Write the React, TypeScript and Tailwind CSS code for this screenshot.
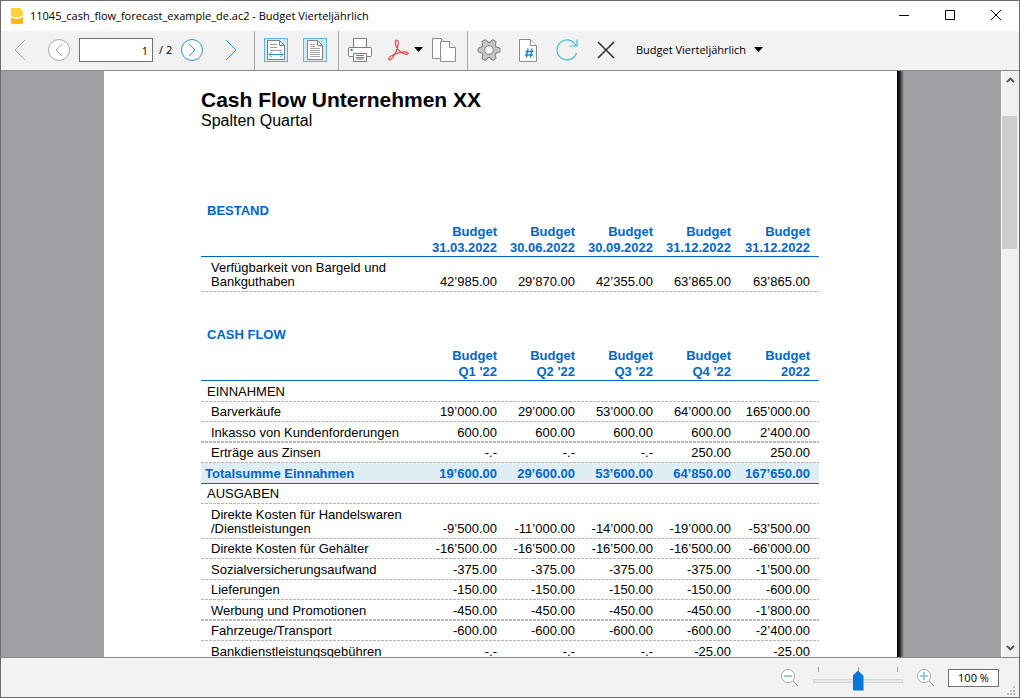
import type { ReactNode } from "react";

type Row = { kind: "group" | "item" | "total"; label: string; values: string[]; heavy?: boolean };

const balanceHeads = [
  ["Budget", "31.03.2022"],
  ["Budget", "30.06.2022"],
  ["Budget", "30.09.2022"],
  ["Budget", "31.12.2022"],
  ["Budget", "31.12.2022"],
];

const flowHeads = [
  ["Budget", "Q1 '22"],
  ["Budget", "Q2 '22"],
  ["Budget", "Q3 '22"],
  ["Budget", "Q4 '22"],
  ["Budget", "2022"],
];

const balanceRows: Row[] = [
  {
    kind: "item",
    label: "Verfügbarkeit von Bargeld und\nBankguthaben",
    values: ["42’985.00", "29’870.00", "42’355.00", "63’865.00", "63’865.00"],
  },
];

const flowRows: Row[] = [
  { kind: "group", label: "EINNAHMEN", values: ["", "", "", "", ""] },
  { kind: "item", label: "Barverkäufe", values: ["19’000.00", "29’000.00", "53’000.00", "64’000.00", "165’000.00"] },
  { kind: "item", label: "Inkasso von Kundenforderungen", values: ["600.00", "600.00", "600.00", "600.00", "2’400.00"], heavy: true },
  { kind: "item", label: "Erträge aus Zinsen", values: ["-.-", "-.-", "-.-", "250.00", "250.00"] },
  { kind: "total", label: "Totalsumme Einnahmen", values: ["19’600.00", "29’600.00", "53’600.00", "64’850.00", "167’650.00"] },
  { kind: "group", label: "AUSGABEN", values: ["", "", "", "", ""] },
  {
    kind: "item",
    label: "Direkte Kosten für Handelswaren\n/Dienstleistungen",
    values: ["-9’500.00", "-11’000.00", "-14’000.00", "-19’000.00", "-53’500.00"],
  },
  { kind: "item", label: "Direkte Kosten für Gehälter", values: ["-16’500.00", "-16’500.00", "-16’500.00", "-16’500.00", "-66’000.00"] },
  { kind: "item", label: "Sozialversicherungsaufwand", values: ["-375.00", "-375.00", "-375.00", "-375.00", "-1’500.00"] },
  { kind: "item", label: "Lieferungen", values: ["-150.00", "-150.00", "-150.00", "-150.00", "-600.00"] },
  { kind: "item", label: "Werbung und Promotionen", values: ["-450.00", "-450.00", "-450.00", "-450.00", "-1’800.00"], heavy: true },
  { kind: "item", label: "Fahrzeuge/Transport", values: ["-600.00", "-600.00", "-600.00", "-600.00", "-2’400.00"] },
  { kind: "item", label: "Bankdienstleistungsgebühren", values: ["-.-", "-.-", "-.-", "-25.00", "-25.00"] },
];

const dashed =
  "bg-[repeating-linear-gradient(90deg,#b8b8b8_0_3px,transparent_3px_4px)] bg-bottom bg-no-repeat *:pb-[3px]";

const rowStyle = {
  group: dashed,
  item: dashed,
  total: "bg-[#dfedf5] text-[#0066cc] *:border-b *:border-[#0066cc] *:pb-0.5",
};

const ruleSize = (row: Row) => {
  if (row.kind === "total") return "";
  return row.heavy ? "bg-size-[100%_2px]" : "bg-size-[100%_1px]";
};

const labelStyle = {
  group: "pl-1.5 font-normal",
  item: "pl-2.5 font-normal",
  total: "pl-1 font-bold",
};

function ReportTable({ title, heads, rows }: { title: string; heads: string[][]; rows: Row[] }) {
  return (
    <table className="w-full table-fixed border-separate border-spacing-0 text-[13px] leading-[14px]">
      <caption className="pb-[5px] pl-1.5 text-left leading-4 font-bold text-[#0066cc]">{title}</caption>
      <colgroup>
        <col />
        {heads.map((_, i) => (
          <col key={i} className="w-[78px]" />
        ))}
      </colgroup>
      <thead>
        <tr className="leading-4 text-[#0066cc] *:border-b *:border-[#0066cc]">
          <td />
          {heads.map(([top, bottom], i) => (
            <th key={i} scope="col" className="pr-2.5 text-right font-bold whitespace-nowrap last:pr-[9px]">
              {top}
              <br />
              {bottom}
            </th>
          ))}
        </tr>
      </thead>
      <tbody>
        {rows.map((row) => (
          <tr
            key={row.label}
            className={`align-bottom odd:h-[21px] even:h-5 ${rowStyle[row.kind]} ${ruleSize(row)}`}
          >
            <th
              scope="row"
              className={`text-left whitespace-pre ${labelStyle[row.kind]} ${row.label.includes("\n") ? "pt-1" : ""}`}
            >
              {row.label}
            </th>
            {row.values.map((value, i) => (
              <td
                key={i}
                className={`pr-2.5 text-right whitespace-nowrap last:pr-[9px] ${row.kind === "total" ? "font-bold" : ""}`}
              >
                {value}
              </td>
            ))}
          </tr>
        ))}
      </tbody>
    </table>
  );
}

function IconButton({ label, narrow, children }: { label: string; narrow?: boolean; children: ReactNode }) {
  return (
    <button
      type="button"
      aria-label={label}
      className={`flex h-6 shrink-0 items-center justify-center ${narrow ? "w-4" : "w-6"}`}
    >
      {children}
    </button>
  );
}

function Chevron({ flip, color }: { flip?: boolean; color: string }) {
  return (
    <svg width="12" height="22" viewBox="0 0 12 22" fill="none" stroke={color}>
      <path d={flip ? "M1 1l10 10L1 21" : "M11 1L1 11l10 10"} />
    </svg>
  );
}

function RoundChevron({ flip, color }: { flip?: boolean; color: string }) {
  return (
    <svg width="22" height="22" viewBox="0 0 22 22" fill="#fff" stroke={color}>
      <circle cx="11" cy="11" r="10.500" />
      <path d={flip ? "M8 5l6 6-6 6" : "M14 5l-6 6 6 6"} fill="none" />
    </svg>
  );
}

function FitWidthIcon() {
  return (
    <svg width="24" height="24" viewBox="0 0 24 24" fill="none">
      <rect x=".5" y=".5" width="23" height="23" fill="#d3e9f6" stroke="#62b2e2" />
      <path d="M3.500 2.500h12l5 5v14h-17z" fill="#fff" stroke="#808080" />
      <path d="M15.500 2.500v5h5" stroke="#808080" />
      <path d="M6 6.500h7M6 9.500h7M6 12.500h12" stroke="#a0a0a0" />
      <path d="M5 16.500h14M8 13.500l-3 3 3 3M16 13.500l3 3-3 3" stroke="#2f94d4" />
    </svg>
  );
}

function FitPageIcon() {
  return (
    <svg width="24" height="24" viewBox="0 0 24 24" fill="none">
      <rect x=".5" y=".5" width="23" height="23" fill="#d3e9f6" stroke="#62b2e2" />
      <path d="M4.500 2.500h10l5 5v14h-15z" fill="#fff" stroke="#808080" />
      <path d="M14.500 2.500v5h5" stroke="#808080" />
      <path d="M7 6.500h5M7 8.500h5M7 10.500h10M7 12.500h10M7 14.500h10M7 16.500h10M7 18.500h10" stroke="#a8a8a8" />
    </svg>
  );
}

function PrinterIcon() {
  return (
    <svg width="24" height="24" viewBox="0 0 24 24" fill="#fff" stroke="#7c7c7c">
      <path d="M5.500 9.500v-9h13v9" />
      <path d="M1.500 9.500h21q1 0 1 1v7q0 1-1 1h-21q-1 0-1-1v-7q0-1 1-1z" />
      <path d="M5.500 15.500h13v8h-13z" />
      <path d="M8 17.500h8M8 19.500h8M8 21h8" strokeWidth="1.200" />
      <circle cx="3.500" cy="12" r="1.300" fill="#2f94d4" stroke="none" />
    </svg>
  );
}

function PdfIcon() {
  return (
    <svg width="22" height="22" viewBox="0 0 22 22" fill="none" stroke="#f0403c" strokeWidth="1.200">
      <path d="M8.300 8C7.300 5 6.600 1 8.700 1s1.800 3.500.9 7C8.500 12.500 4.500 20.500 1.900 20.800c-2.300.2-1.200-3.300 4-5.300 4.300-1.600 9.500-2.900 12.500-2.400 2.400.5 2.200 2.300.2 2.200-3.300-.2-8.500-3.800-10.300-7.300z" />
    </svg>
  );
}

function CopyIcon() {
  return (
    <svg width="24" height="24" viewBox="0 0 24 24" fill="#fff" stroke="#8c8c8c">
      <path d="M.5.500h9l4 4v16H.500z" />
      <path d="M9.500.500v4h4" />
      <path d="M8.500 3.500h9l6 6v14h-15z" />
      <path d="M17.500 3.500v6h6" />
    </svg>
  );
}

const gearTeeth = ["rotate(0 12 12)", "rotate(60 12 12)", "rotate(120 12 12)"];

function GearShape() {
  return (
    <>
      <circle cx="12" cy="12" r="7.300" />
      {gearTeeth.map((turn) => (
        <path key={turn} transform={turn} d="M4 9.500L1.500 10.500v3L4 14.500h16l2.500-1v-3L20 9.500z" />
      ))}
    </>
  );
}

function GearIcon() {
  return (
    <svg width="24" height="24" viewBox="0 0 24 24">
      <g fill="#777" stroke="#777" strokeWidth="1.800" strokeLinejoin="round">
        <GearShape />
      </g>
      <g fill="#c6c6c6">
        <GearShape />
      </g>
      <circle cx="12" cy="12" r="4.300" fill="#f8f8f8" stroke="#808080" />
    </svg>
  );
}

function PageNumberIcon() {
  return (
    <svg width="18" height="24" viewBox="0 0 18 24" fill="#fff" stroke="#8c8c8c">
      <path d="M.5 1.500h11l6 6v16H.500z" />
      <path d="M11.500 1.500v6h6" />
      <path d="M9 10.500l-1.500 9M13 10.500l-1.500 9M6.500 13.500h8M6 17h8" stroke="#1f86cf" strokeWidth="1.500" />
    </svg>
  );
}

function RefreshIcon() {
  return (
    <svg width="22" height="24" viewBox="0 0 22 24" fill="none" stroke="#45bad2" strokeWidth="1.200">
      <path d="M20 7.500A10 10 0 1 0 20.500 15M21 1.500v6.500h-7" />
    </svg>
  );
}

function CloseIcon() {
  return (
    <svg width="18" height="18" viewBox="0 0 18 18" fill="none" stroke="#333" strokeWidth="1.600">
      <path d="M1 1l16 16M17 1L1 17" />
    </svg>
  );
}

function Triangle() {
  return (
    <svg width="9" height="6" viewBox="0 0 9 6">
      <path d="M0 0h9L4.500 5z" />
    </svg>
  );
}

function ZoomGlass({ plus }: { plus?: boolean }) {
  return (
    <svg width="18" height="18" viewBox="0 0 18 18" fill="#fff" stroke="#aaa">
      <path d="M12 12l5 5" stroke="#888" />
      <circle cx="7" cy="7" r="6.500" />
      <path d={plus ? "M3 7h8M7 3v8" : "M3 7h8"} stroke="#7dbde6" strokeWidth="1.600" />
    </svg>
  );
}

function TitleBar() {
  return (
    <header className="flex h-[30px] shrink-0 items-center bg-white pr-[18px] pl-[9px]">
      <svg width="14" height="16" viewBox="0 0 14 16" className="mr-1.5 shrink-0">
        <path d="M1 1q0-1 1-1h8l3 3v4Q7 11.500 1 8z" fill="#ffd23c" />
        <path d="M1 9.500Q7 12.500 13 9v5.500q0 1.500-1.500 1.500H2.500Q1 16 1 14.500z" fill="#fbb917" />
      </svg>
      <h1 className="grow whitespace-nowrap">11045_cash_flow_forecast_example_de.ac2 - Budget Vierteljährlich</h1>
      <div className="flex items-center gap-9 pb-0.5">
        <button type="button" aria-label="Minimieren">
          <svg width="10" height="10" viewBox="0 0 10 10" stroke="#000">
            <path d="M0 5.500h10" />
          </svg>
        </button>
        <button type="button" aria-label="Maximieren">
          <svg width="10" height="10" viewBox="0 0 10 10" fill="none" stroke="#000">
            <path d="M.5.500h9v9h-9z" />
          </svg>
        </button>
        <button type="button" aria-label="Schliessen">
          <svg width="10" height="10" viewBox="0 0 10 10" fill="none" stroke="#000">
            <path d="M0 0l10 10M10 0L0 10" />
          </svg>
        </button>
      </div>
    </header>
  );
}

function Divider() {
  return <div className="-mb-px w-px self-stretch bg-[#a8a8a8]" />;
}

function Toolbar() {
  return (
    <div className="flex h-10 shrink-0 items-center border-b border-[#888c94] bg-[#f2f2f2] pb-px">
      <div className="flex items-center pr-[11px] pl-[11px]">
        <IconButton label="Erste Seite" narrow>
          <Chevron color="#aaa" />
        </IconButton>
        <div className="pr-2 pl-[19px]">
          <IconButton label="Vorherige Seite">
            <RoundChevron color="#aaa" />
          </IconButton>
        </div>
        <input
          aria-label="Seite"
          defaultValue="1"
          className="h-6 w-[74px] border border-[#707070] bg-white px-1 text-right"
        />
        <span className="w-[27px] pl-1.5 whitespace-nowrap">/ 2</span>
        <IconButton label="Nächste Seite">
          <RoundChevron flip color="#2f94d4" />
        </IconButton>
        <div className="pl-[15px]">
          <IconButton label="Letzte Seite">
            <Chevron flip color="#2f94d4" />
          </IconButton>
        </div>
      </div>
      <Divider />
      <div className="flex items-center gap-[15px] pr-[11px] pl-[9px]">
        <IconButton label="Seitenbreite">
          <FitWidthIcon />
        </IconButton>
        <IconButton label="Ganze Seite">
          <FitPageIcon />
        </IconButton>
      </div>
      <Divider />
      <div className="flex items-center pr-[11px] pl-[9px]">
        <IconButton label="Drucken">
          <PrinterIcon />
        </IconButton>
        <div className="pr-[9px] pl-4">
          <button type="button" aria-label="PDF" className="flex items-center gap-1">
            <PdfIcon />
            <Triangle />
          </button>
        </div>
        <IconButton label="Kopieren">
          <CopyIcon />
        </IconButton>
      </div>
      <Divider />
      <div className="flex items-center gap-[15px] pl-[9px]">
        <IconButton label="Einstellungen">
          <GearIcon />
        </IconButton>
        <IconButton label="Seitennummer">
          <PageNumberIcon />
        </IconButton>
        <IconButton label="Aktualisieren">
          <RefreshIcon />
        </IconButton>
        <IconButton label="Abbrechen">
          <CloseIcon />
        </IconButton>
      </div>
      <button type="button" className="flex items-center gap-2 pl-[18px] whitespace-nowrap">
        Budget Vierteljährlich
        <Triangle />
      </button>
    </div>
  );
}

function ScrollBar() {
  return (
    <div className="flex w-[18px] shrink-0 flex-col border-l border-white bg-[#f0f0f0]">
      <button type="button" aria-label="Nach oben" className="flex h-[18px] items-center justify-center">
        <svg width="9" height="6" viewBox="0 0 9 6" fill="none" stroke="#555" strokeWidth="1.800">
          <path d="M1 5l3.500-3.500L8 5" />
        </svg>
      </button>
      <div className="flex grow flex-col">
        <div className="grow-[27]" />
        <div className="mr-0.5 grow-[133] bg-[#cdcdcd]" />
        <div className="grow-[391]" />
      </div>
      <button type="button" aria-label="Nach unten" className="flex h-[18px] items-center justify-center">
        <svg width="9" height="6" viewBox="0 0 9 6" fill="none" stroke="#555" strokeWidth="1.800">
          <path d="M1 1l3.500 3.500L8 1" />
        </svg>
      </button>
    </div>
  );
}

function StatusBar() {
  return (
    <footer className="flex h-10 shrink-0 items-center justify-end border-t border-[#888] bg-[#f2f2f2]">
      <button type="button" aria-label="Verkleinern">
        <ZoomGlass />
      </button>
      <div className="grid px-[13px]">
        <div className="col-start-1 row-start-1 h-7 w-[92px]">
          <svg width="92" height="28" viewBox="0 0 92 28" fill="none">
            <path d="M6.500 3v5M46.500 3v5M85.500 3v5" stroke="#a5a58f" />
            <rect x="1.500" y="15.500" width="89" height="3" fill="#e7eaea" stroke="#d6d6d6" />
          </svg>
        </div>
        <input
          type="range"
          aria-label="Zoom"
          min={0}
          max={100}
          defaultValue={50}
          className="col-start-1 row-start-1 h-7 w-[92px] appearance-none bg-transparent [&::-webkit-slider-thumb]:mt-1.5 [&::-webkit-slider-thumb]:h-5 [&::-webkit-slider-thumb]:w-[11px] [&::-webkit-slider-thumb]:appearance-none [&::-webkit-slider-thumb]:bg-[#0078d7] [&::-webkit-slider-thumb]:[clip-path:polygon(50%_0,100%_26%,100%_100%,0_100%,0_26%)]"
        />
      </div>
      <button type="button" aria-label="Vergrössern">
        <ZoomGlass plus />
      </button>
      <input
        aria-label="Zoomstufe"
        defaultValue="100 %"
        className="ml-[13px] h-[18px] w-[51px] border border-[#707070] bg-white text-center"
      />
      <svg width="20" height="38" viewBox="0 0 20 38" fill="#bfbfbf" className="self-end">
        <path d="M14 27h2v2h-2zM11 31h2v2h-2zM14 31h2v2h-2zM8 34h2v2H8zM11 34h2v2h-2zM14 34h2v2h-2z" />
      </svg>
    </footer>
  );
}

export default function App() {
  return (
    <div className="flex h-screen flex-col overflow-hidden border border-[#6b6b6b] bg-[#f2f2f2] font-['Open_Sans',sans-serif] text-[11px] leading-4 text-black">
      <TitleBar />
      <Toolbar />
      <div className="flex min-h-0 grow">
        <main className="flex min-w-0 grow justify-center overflow-hidden bg-[#a0a0a4] pl-1.5">
          <article className="w-[793px] shrink-0 self-stretch bg-white pt-[17px] pr-[78px] pl-[97px] font-['Liberation_Sans',sans-serif]">
            <h2 className="text-[21px] leading-6 font-bold">Cash Flow Unternehmen XX</h2>
            <p className="pt-px text-[16px] leading-4">Spalten Quartal</p>
            <div className="flex flex-col gap-[35px] pt-[74px]">
              <ReportTable title="BESTAND" heads={balanceHeads} rows={balanceRows} />
              <ReportTable title="CASH FLOW" heads={flowHeads} rows={flowRows} />
            </div>
          </article>
          <div className="w-[7px] shrink-0 bg-linear-to-r from-black to-[#a0a0a4]" />
        </main>
        <ScrollBar />
      </div>
      <StatusBar />
    </div>
  );
}
